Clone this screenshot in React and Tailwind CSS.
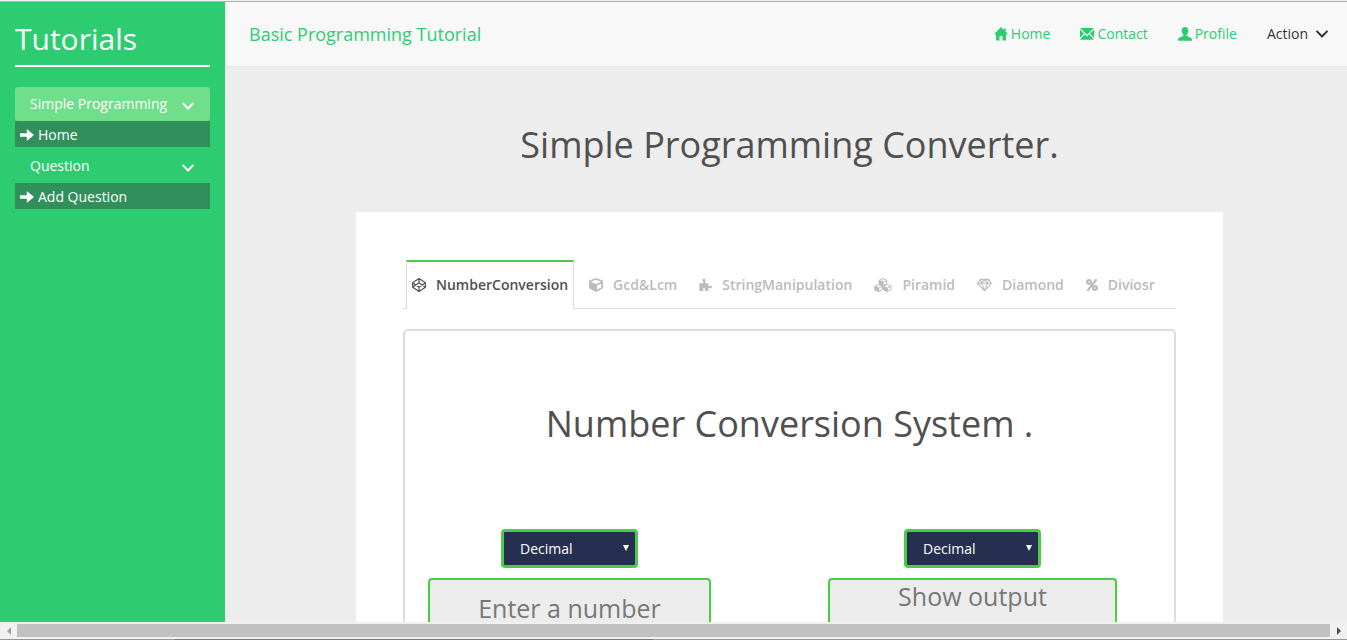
import React from "react";
import { FaCube } from "react-icons/fa";

function Glyph({ d, className = "" }) {
  return (
    <svg viewBox="0 0 14 14" aria-hidden="true" className={"size-3.5 shrink-0 " + className} fill="currentColor">
      <path d={d} fillRule="evenodd" />
    </svg>
  );
}

const HOME = "M7 0 0 7.200h2V13a.6.6 0 0 0 .6.6H5.500V9h3v4.600h2.900A.6.6 0 0 0 12 13V7.200h2L11.700 4.700V1.500H10V3Z";
const ENVELOPE =
  "M0 1h14L7 7.800ZM0 2.500 4 6.500 0 10.900ZM14 2.500V10.900L10 6.500ZM4.800 7.300 7 9.500l2.200-2.200L14 12.700H0Z";
const USER =
  "M7 0c2 0 3.300 1.400 3.300 3.500 0 1.800-.5 3-1.500 4.100-.4.500-.3 1.200.3 1.500l3.600 1.700c.8.400 1.300 1 1.300 1.800V13.800H0V12.600c0-.8.500-1.400 1.300-1.800l3.600-1.700c.6-.3.700-1 .3-1.500C4.200 6.500 3.700 5.300 3.700 3.500 3.700 1.400 5 0 7 0Z";
const ARROW = "M0 5.300h6.800V1L14 7 6.800 13V8.700H0Z";
const CHEVRON = "M.8 4.600 2.200 3.200 7 8 11.800 3.200 13.200 4.600 7 10.900Z";

function CodepenIcon({ className }) {
  return (
    <svg viewBox="0 0 14 14" aria-hidden="true" className={className} fill="none" stroke="currentColor" strokeWidth="1.200" strokeLinejoin="round">
      <path d="M7 .6 13.400 4.700V9.300L7 13.400.6 9.300V4.700ZM.6 4.700 7 9.200l6.400-4.500M.6 9.300 7 4.800l6.400 4.500M7 .6v4.200M7 9.200v4.200" />
    </svg>
  );
}

function PuzzleIcon({ className }) {
  return (
    <svg viewBox="0 0 14 14" aria-hidden="true" className={className} fill="currentColor">
      <path d="M.3 5.200h3.900c.7 0 .9-.6.4-1.200-.8-1-1-1.700-.8-2.400C4 .7 4.600.3 5.400.3c1 0 1.700.6 1.700 1.600 0 .8-.6 1.300-.6 2.100 0 .8.500 1.200 1.300 1.200H10v2.400c0 .8.500 1 1.100.6 1.400-1 2.700-.4 2.700 1s-1.200 2-2.500 1.100c-.8-.5-1.300-.2-1.300.6V13.400H6.800c-.5 0-.6-.4-.4-.8.600-.9.500-2.100-.9-2.100s-1.700 1.200-1 2.100c.3.500.1.800-.4.800H.3Z" />
    </svg>
  );
}

const cubePositions = ["translate(5 0)", "translate(.7 6)", "translate(9.300 6)"];

function CubesIcon({ className }) {
  return (
    <svg viewBox="0 0 18 14" aria-hidden="true" className={className} stroke="currentColor" strokeWidth="1" strokeLinejoin="round">
      {cubePositions.map((t) => (
        <g key={t} transform={t}>
          <path d="M4 .6 7.700 2.200V5.800L4 7.500.3 5.800V2.200Z" fill="none" />
          <path d="M.3 2.400 4 4v3.500L.3 5.800Z" fill="currentColor" />
          <path d="M4 4 7.700 2.400" fill="none" />
        </g>
      ))}
    </svg>
  );
}

function DiamondIcon({ className }) {
  return (
    <svg viewBox="0 0 16 14" aria-hidden="true" className={className} fill="none" stroke="currentColor" strokeWidth="1.100" strokeLinejoin="round">
      <path d="M3.600 1h8.800L15.400 5.200 8 13.200.6 5.200ZM.6 5.200h14.800M3.600 1 5 5.200l3 8 3-8L12.400 1M5 5.200 8 1l3 4.200" />
    </svg>
  );
}

function PercentIcon({ className }) {
  return (
    <svg viewBox="0 0 12 13" aria-hidden="true" className={className} fill="none" stroke="currentColor" strokeWidth="2.200">
      <circle cx="3" cy="3.500" r="1.900" />
      <circle cx="9" cy="9.500" r="1.900" />
      <path d="M10.600.8 1.500 12.200" />
    </svg>
  );
}

const tabs = [
  { label: "NumberConversion", Icon: CodepenIcon, size: "w-3.5" },
  { label: "Gcd&Lcm", Icon: FaCube, size: "w-3.5" },
  { label: "StringManipulation", Icon: PuzzleIcon, size: "w-[13px]" },
  { label: "Piramid", Icon: CubesIcon, size: "w-[18px]" },
  { label: "Diamond", Icon: DiamondIcon, size: "w-[15px]" },
  { label: "Diviosr", Icon: PercentIcon, size: "w-3" },
];

const navLinks = [
  { label: "Home", d: HOME },
  { label: "Contact", d: ENVELOPE },
  { label: "Profile", d: USER },
];

function SidebarGroup({ title, child, active }) {
  return (
    <li>
      <button
        type="button"
        className={"flex w-full items-center justify-between px-[15px] text-left " + (active ? "h-[34px] rounded-[3px] bg-[#71de8b]" : "h-9 pt-0.5")}
      >
        {title}
        <Glyph d={CHEVRON} className="mt-1" />
      </button>
      <a href="#" className="flex h-[26px] items-center gap-1 bg-[#318f5b] pt-0.5 pl-[5px]">
        <Glyph d={ARROW} />
        {child}
      </a>
    </li>
  );
}

function BaseSelect({ id, label }) {
  return (
    <div className="relative">
      <label htmlFor={id} className="hidden">{label}</label>
      <select
        id={id}
        className="block h-[39px] w-[137px] appearance-none rounded-[4px] border-3 border-[#4bcc46] bg-[#262f50] px-4 text-sm text-white"
      >
        <option>Decimal</option>
        <option>Binary</option>
        <option>Octal</option>
        <option>Hexadecimal</option>
      </select>
      <svg viewBox="0 0 6 6" aria-hidden="true" className="pointer-events-none absolute top-4 right-[9px] size-1.5" fill="#fff">
        <path d="M0 0h6L3 6Z" />
      </svg>
    </div>
  );
}

const field =
  "block h-[60px] w-full resize-none rounded-[4px] border-2 border-[#4bcc46] bg-[#ececec] text-center text-[25px] leading-8 placeholder:text-[#777]";

export default function App() {
  return (
    <div className="flex h-screen flex-col overflow-hidden bg-[#ededed] font-['Open_Sans',sans-serif] text-sm text-[#505050]">
      <div className="h-0.5 shrink-0 border-b border-[#b2b2b2] bg-[#f0f0f0]" />
      <div className="flex min-h-0 flex-1">
        <aside className="w-[225px] shrink-0 bg-[#2ecc71] px-[15px] text-white">
          <h2 className="mb-5 h-[65px] border-b-2 border-white pt-4 text-[30px] leading-[42px]">Tutorials</h2>
          <ul>
            <SidebarGroup title="Simple Programming" child="Home" active />
            <SidebarGroup title="Question" child="Add Question" />
          </ul>
        </aside>

        <div className="min-w-0 flex-1 overflow-hidden pl-0.5">
          <header className="flex h-[65px] items-center justify-between border-b border-[#e7e7e7] bg-[#f8f8f8] pr-[18px] pl-[22px] text-[#2ecc71]">
            <a href="#" className="text-lg">Basic Programming Tutorial</a>
            <nav className="flex items-center gap-[30px]">
              {navLinks.map((l) => (
                <a key={l.label} href="#" className="flex items-center gap-[3px]">
                  <Glyph d={l.d} />
                  {l.label}
                </a>
              ))}
              <button type="button" className="flex items-center gap-[7px] text-[#333]">
                Action
                <Glyph d={CHEVRON} />
              </button>
            </nav>
          </header>

          <main className="mr-[124px] ml-[129px]">
            <h1 className="pt-[53px] pb-[42px] text-center text-4xl leading-[50px]">Simple Programming Converter.</h1>
            <div className="bg-white px-[47px] pt-12">
              <div role="tablist" className="flex h-[49px] border-b border-[#ddd] pl-[3px] font-semibold whitespace-nowrap">
                {tabs.map(({ label, Icon, size }, i) => (
                  <button
                    key={label}
                    type="button"
                    role="tab"
                    aria-selected={i === 0}
                    className={
                      "flex h-[49px] items-center gap-2.5 border-x px-[5px] " +
                      (i === 0 ? "mr-[9px] border-t-2 border-x-[#ddd] border-t-[#4bcc46] bg-white pb-px" : "mr-2.5 border-transparent pt-px text-[#bbb]")
                    }
                  >
                    <Icon className={"h-3.5 shrink-0 " + size} />
                    {label}
                  </button>
                ))}
              </div>

              <section className="mt-5 rounded-[5px] border-2 border-[#ddd] pr-[57px] pl-[23px]">
                <h2 className="-mr-[34px] pt-[68px] pb-20 text-center text-4xl leading-[50px]">Number Conversion System .</h2>
                <div className="grid grid-cols-[283fr_289fr] gap-[117px] pb-20">
                  <div className="flex flex-col items-center gap-2.5">
                    <BaseSelect id="from" label="Convert from" />
                    <input type="text" aria-label="Number" placeholder="Enter a number" className={field} />
                  </div>
                  <div className="flex flex-col items-center gap-2.5">
                    <BaseSelect id="to" label="Convert to" />
                    <textarea aria-label="Output" placeholder="Show output" className={field} />
                  </div>
                </div>
              </section>
            </div>
          </main>
        </div>
      </div>

      <div className="flex h-[17px] shrink-0 items-center bg-[#f1f1f1]">
        <button type="button" aria-label="Scroll left" className="flex w-[17px] justify-center">
          <svg viewBox="0 0 4 8" className="h-2 w-1" fill="#a3a3a3"><path d="M4 0v8L0 4Z" /></svg>
        </button>
        <div className="h-[13px] flex-1 bg-[#c1c1c1]" />
        <button type="button" aria-label="Scroll right" className="flex w-[17px] justify-center">
          <svg viewBox="0 0 4 8" className="h-2 w-1" fill="#505050"><path d="M0 0v8L4 4Z" /></svg>
        </button>
      </div>
      <div className="flex h-px shrink-0 bg-[#9b9a7b]">
        <div className="ml-[175px] w-[478px] bg-[#7f7a62]" />
      </div>
    </div>
  );
}
